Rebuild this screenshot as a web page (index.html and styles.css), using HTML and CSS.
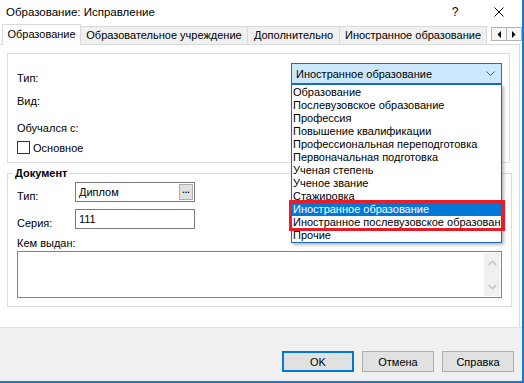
FILE: index.html
```html
<!DOCTYPE html>
<html lang="ru">
<head>
  <meta charset="UTF-8" />
  <title>Образование: Исправление</title>
  <link rel="stylesheet" href="styles.css">
</head>
<body>
  <div class="window">
    <!-- Заголовок окна -->
    <div class="titlebar">
      <span class="title">Образование: Исправление</span>
      <div class="caption">
        <span class="cap help">?</span>
        <span class="cap close">
          <svg width="10" height="10" viewBox="0 0 10 10"><path d="M0.5 0.5 L9.5 9.5 M9.5 0.5 L0.5 9.5" stroke="#000" stroke-width="1" fill="none"/></svg>
        </span>
      </div>
    </div>

    <!-- Вкладки -->
    <div class="tabs">
      <div class="tab active tab-edu">Образование</div>
      <div class="tab tab-inst">Образовательное учреждение</div>
      <div class="tab tab-extra">Дополнительно</div>
      <div class="tab tab-foreign">Иностранное образование</div>
      <div class="tab-scroll">
        <span class="arrow"><svg width="4" height="7" viewBox="0 0 4 7"><polygon points="4,0 4,7 0.5,3.5" fill="#000"/></svg></span>
        <span class="arrow"><svg width="4" height="7" viewBox="0 0 4 7"><polygon points="0,0 0,7 3.5,3.5" fill="#000"/></svg></span>
      </div>
    </div>

    <div class="page">
      <div class="group main-group">
        <div class="labels">
          <div class="lbl">Тип:</div>
          <div class="lbl lbl-kind">Вид:</div>
          <div class="lbl lbl-since">Обучался с:</div>
          <label class="check-row">
            <span class="checkbox"></span>
            <span>Основное</span>
          </label>
        </div>

        <div class="combo-wrap">
          <div class="combo">
            <span class="combo-text">Иностранное образование</span>
            <svg width="9" height="5" viewBox="0 0 9 5"><path d="M0.5 0.5 L4.5 4.5 L8.5 0.5" stroke="#555" stroke-width="1" fill="none"/></svg>
          </div>
          <ul class="dropdown">
            <li>Образование</li>
            <li>Послевузовское образование</li>
            <li>Профессия</li>
            <li>Повышение квалификации</li>
            <li>Профессиональная переподготовка</li>
            <li>Первоначальная подготовка</li>
            <li>Ученая степень</li>
            <li>Ученое звание</li>
            <li>Стажировка</li>
            <li class="selected">Иностранное образование</li>
            <li>Иностранное послевузовское образование</li>
            <li>Прочие</li>
          </ul>
          <div class="mark"></div>
        </div>
      </div>

      <fieldset class="doc">
        <legend>Документ</legend>
        <div class="doc-row">
          <span class="doc-lbl">Тип:</span>
          <div class="field">
            <span class="field-text">Диплом</span>
            <span class="dots">...</span>
          </div>
        </div>
        <div class="doc-row row-gap">
          <span class="doc-lbl">Серия:</span>
          <div class="field">
            <span class="field-text">111</span>
          </div>
        </div>
        <div class="issued">Кем выдан:</div>
        <div class="memo">
          <div class="vscroll">
            <svg width="9" height="6" viewBox="0 0 9 6"><path d="M0.7 5 L4.5 1.2 L8.3 5" stroke="#c4c4c4" stroke-width="1.5" fill="none"/></svg>
            <svg width="9" height="6" viewBox="0 0 9 6"><path d="M0.7 1 L4.5 4.8 L8.3 1" stroke="#c4c4c4" stroke-width="1.5" fill="none"/></svg>
          </div>
        </div>
      </fieldset>
    </div>

    <div class="footer">
      <button class="btn btn-default">OK</button>
      <button class="btn">Отмена</button>
      <button class="btn">Справка</button>
    </div>
  </div>
</body>
</html>
```

FILE: styles.css
```css
:root {
  --frame:      #1c76cc;
  --line:       #d9d9d9;
  --face:       #f0f0f0;
  --accent:     #0078d7;
  --combo-bg:   #cce8ff;
  --mark:       #ea1c27;
}

* { box-sizing: border-box; margin: 0; padding: 0; }

body {
  font-family: "Liberation Sans", Arial, sans-serif;
  font-size: 11px;
  color: #000;
  background: #fff;
}

.window {
  width: 524px;
  height: 383px;
  border-right: 2px solid var(--frame);
  border-bottom: 2px solid var(--frame);
  display: flex;
  flex-direction: column;
  background: #fff;
}

/* === Заголовок === */
.titlebar {
  height: 24px;
  display: flex;
  align-items: center;
  justify-content: space-between;
}
.title {
  padding-left: 6px;
  font-size: 11.5px;
}
.caption { display: flex; }
.cap {
  width: 46px;
  height: 24px;
  display: flex;
  align-items: center;
  justify-content: center;
}
.help { font-size: 12px; padding-left: 4px; }

/* === Вкладки === */
.tabs {
  height: 20px;
  display: flex;
  align-items: flex-end;
  padding-left: 2px;
}
.tab {
  height: 18px;
  line-height: 17px;
  text-align: center;
  background: var(--face);
  border: 1px solid var(--line);
  border-bottom: none;
  margin-left: -1px;
  white-space: nowrap;
}
.tab.active {
  height: 21px;
  line-height: 19px;
  margin-left: 0;
  margin-bottom: -1px;
  background: #fff;
  z-index: 1;
}
.tab-edu     { width: 79px; }
.tab-inst    { width: 168px; }
.tab-extra   { width: 93px; }
.tab-foreign { width: 148px; }

.tab-scroll {
  display: flex;
  align-self: flex-start;
  margin-top: 3px;
  margin-left: 4px;
}
.arrow {
  width: 16px;
  height: 14px;
  border: 1px solid #b4b4b4;
  background: #f7f7f7;
  display: flex;
  align-items: center;
  justify-content: center;
}
.arrow + .arrow { margin-left: -1px; }

/* === Страница вкладки === */
.page {
  width: 520px;
  height: 283px;
  border-top: 1px solid var(--line);
  border-right: 1px solid var(--line);
  padding: 8px 0 0 7px;
}

.group {
  border: 1px solid #dcdcdc;
}
.main-group {
  width: 503px;
  height: 110px;
  display: flex;
  justify-content: space-between;
}
.labels {
  padding: 17px 0 0 9px;
}
.lbl { line-height: 15px; }
.lbl-kind  { margin-top: 8px; }
.lbl-since { margin-top: 12px; }
.check-row {
  display: flex;
  align-items: center;
  gap: 3px;
  height: 15px;
  margin-top: 4px;
}
.checkbox {
  width: 13px;
  height: 13px;
  border: 1px solid #333;
  background: #fff;
}

/* Комбобокс с раскрытым списком */
.combo-wrap {
  position: relative;
  width: 211px;
  margin: 9px 7px 0 0;
}
.combo {
  height: 21px;
  border: 1px solid var(--accent);
  background: var(--combo-bg);
  display: flex;
  align-items: center;
  justify-content: space-between;
  padding: 0 6px 0 4px;
}
.dropdown {
  position: absolute;
  top: 21px;
  left: 0;
  width: 211px;
  list-style: none;
  background: #fff;
  border: 1px solid #1768b8;
  padding-top: 1px;
  box-shadow: 2px 2px 3px rgba(0,0,0,0.28);
  z-index: 2;
}
.dropdown li {
  height: 13px;
  line-height: 13px;
  padding-left: 1px;
  white-space: nowrap;
  overflow: hidden;
}
.dropdown li.selected {
  background: var(--accent);
  color: #fff;
}
.mark {
  position: absolute;
  top: 137px;
  left: -2px;
  width: 216px;
  height: 31px;
  border: 3px solid var(--mark);
  z-index: 3;
}

/* === Группа «Документ» === */
.doc {
  width: 505px;
  margin-top: 3px;
  border: 1px solid #dcdcdc;
  padding: 1px 9px 8px 9px;
}
.doc legend {
  font-weight: bold;
  line-height: 15px;
  padding: 0 2px;
  margin-left: -4px;
}
.doc-row {
  display: flex;
}
.row-gap { margin-top: 5px; }
.doc-lbl {
  width: 58px;
  padding-top: 7px;
  line-height: 15px;
}
.field {
  width: 120px;
  height: 20px;
  border: 1px solid #7a7a7a;
  background: #fff;
  display: flex;
  align-items: center;
  justify-content: space-between;
  padding: 0 1px 0 3px;
}
.dots {
  width: 14px;
  height: 16px;
  border: 1px solid #adadad;
  background: #e1e1e1;
  font-size: 9px;
  font-weight: bold;
  line-height: 10px;
  text-align: center;
}
.issued {
  margin-top: 5px;
  line-height: 15px;
}
.memo {
  height: 47px;
  border: 1px solid #828282;
  display: flex;
  justify-content: flex-end;
}
.vscroll {
  width: 16px;
  margin: 1px 1px 1px 0;
  background: var(--face);
  display: flex;
  flex-direction: column;
  align-items: center;
  justify-content: space-between;
  padding: 7px 0 6px;
}

/* === Кнопки === */
.footer {
  flex: 1;
  border-top: 1px solid #dfdfdf;
  background: var(--face);
  display: flex;
  justify-content: flex-end;
  align-items: flex-start;
  gap: 8px;
  padding: 23px 8px 0 0;
}
.btn {
  width: 72px;
  height: 21px;
  border: 1px solid #adadad;
  background: #e1e1e1;
  font-family: inherit;
  font-size: 11px;
  color: #000;
}
.btn-default {
  border: 2px solid var(--accent);
}
```
